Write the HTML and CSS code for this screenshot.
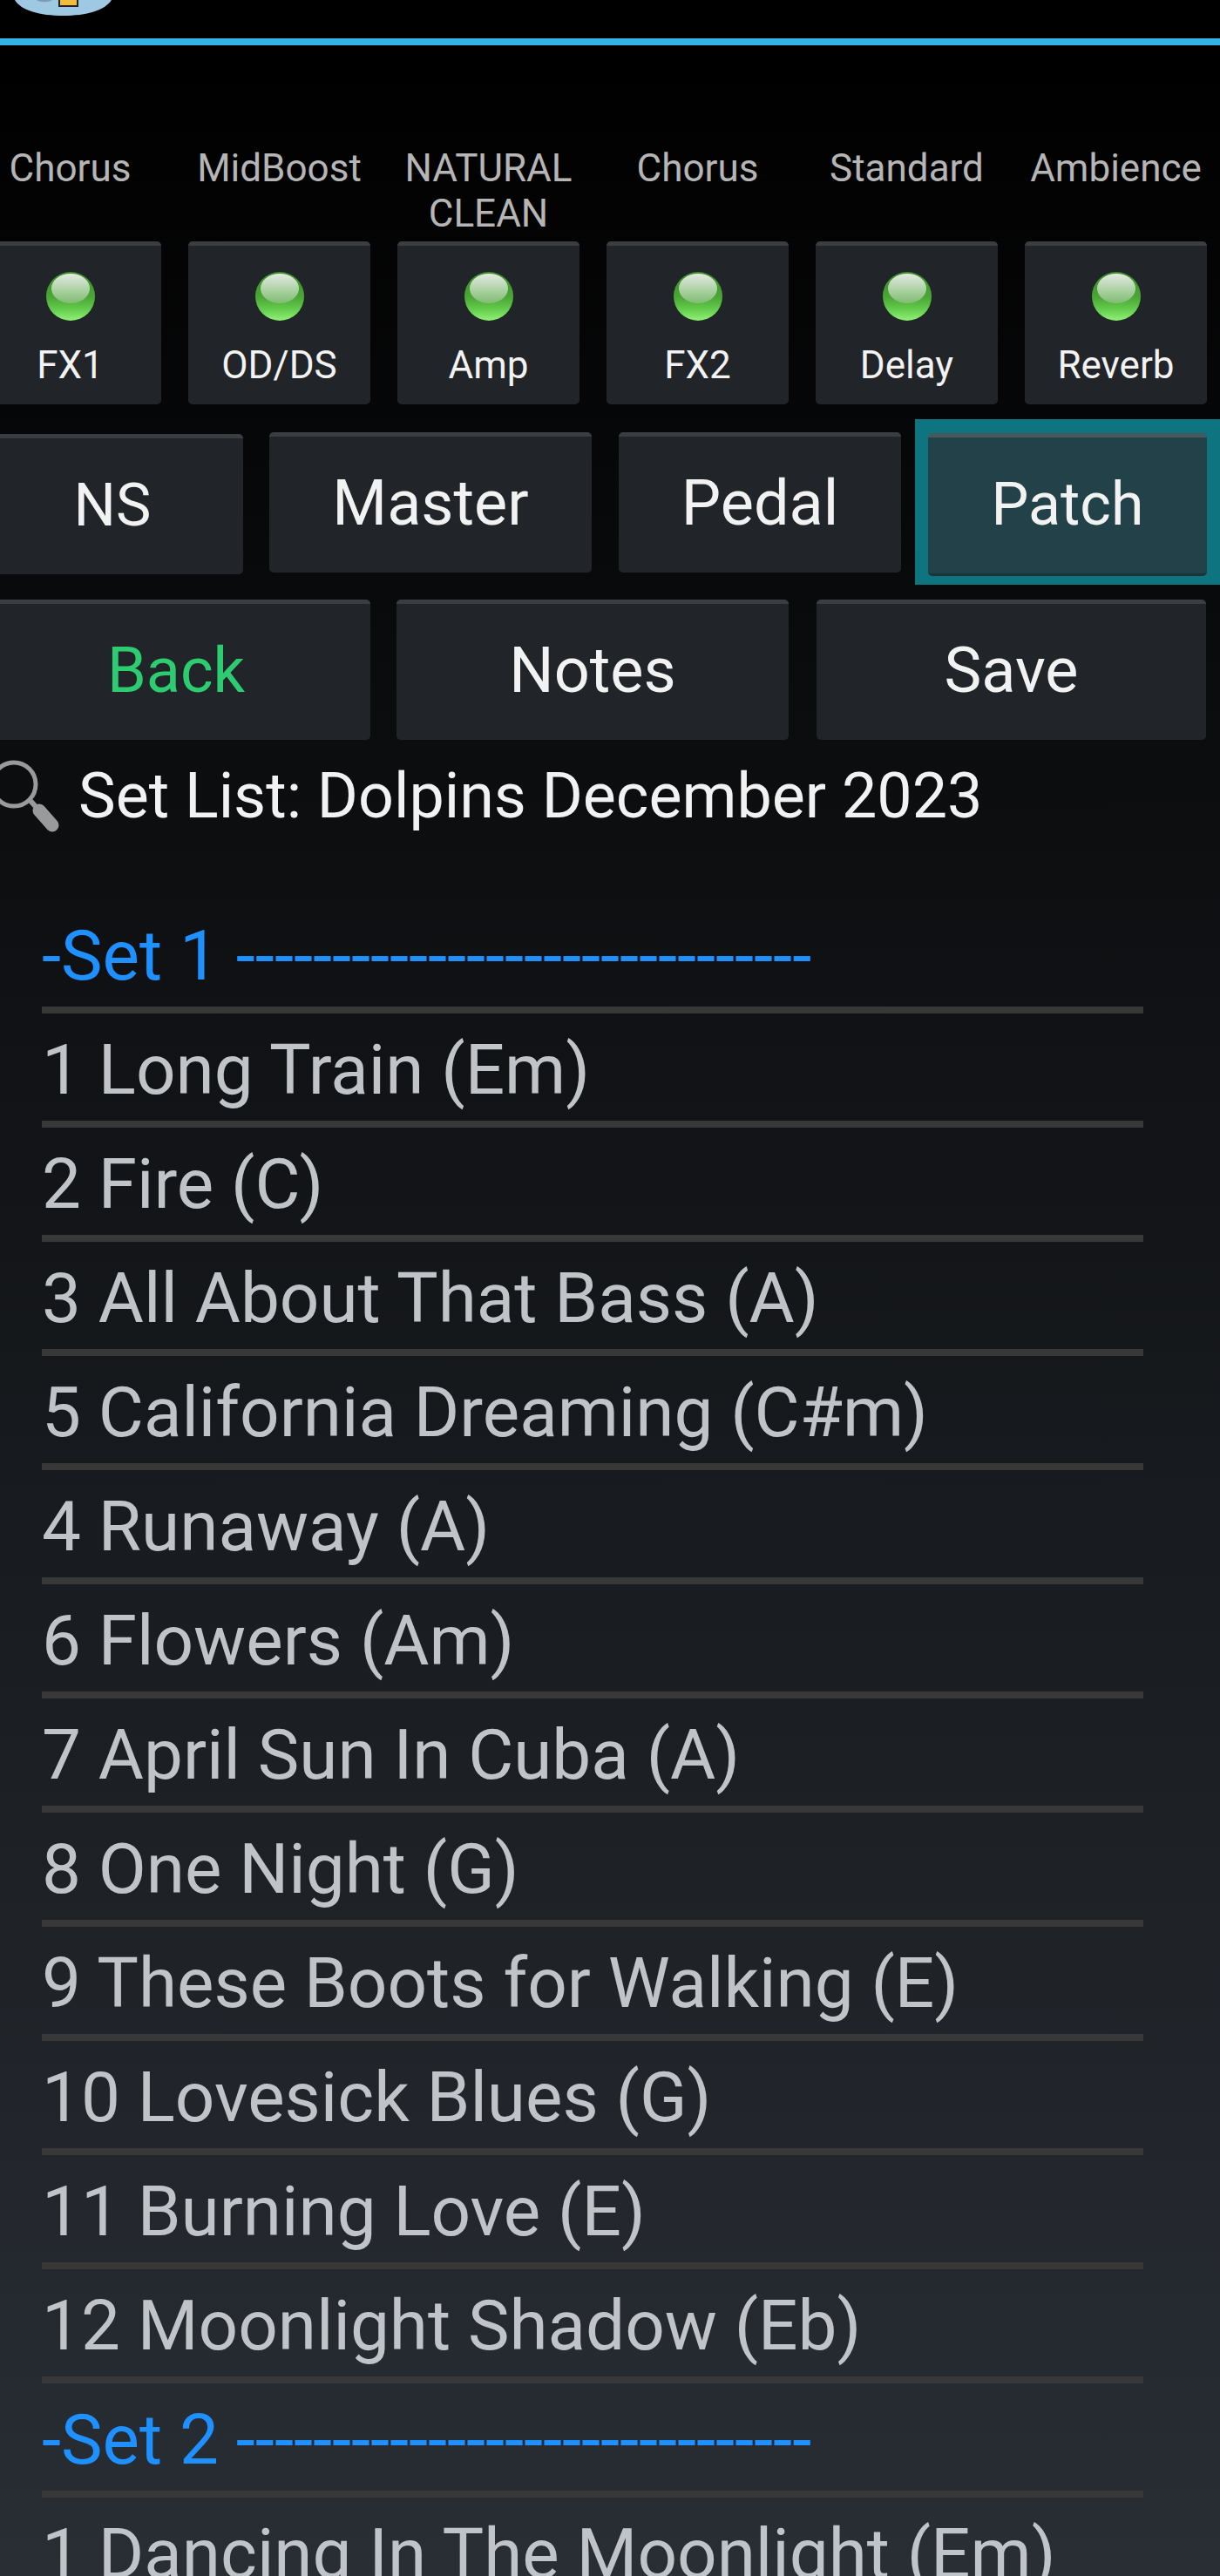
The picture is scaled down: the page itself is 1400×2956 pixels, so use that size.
FILE: index.html
```html
<!DOCTYPE html>
<html lang="en">
<head>
  <meta charset="UTF-8">
  <meta name="viewport" content="width=device-width, initial-scale=1.0">
  <title>Set List</title>
  <link rel="stylesheet" href="styles.css">
</head>
<body>
  <header class="topbar">
    <svg class="app-icon" width="140" height="24" viewBox="0 0 140 24">
      <path d="M17 0 C24 12 46 18 72 18 C100 18 120 12 128 0 Z" fill="#9fc8e2"/>
      <path d="M42 0 C46 3 56 3 60 0 Z" fill="#7f9db0"/>
      <rect x="68" y="-4" width="21" height="11" fill="#f2bd3e" stroke="#222" stroke-width="2"/>
    </svg>
  </header>

  <main class="content">
    <!-- Effect blocks -->
    <div class="fx-grid">
      <div class="fx-name">Chorus</div>
      <div class="fx-name">MidBoost</div>
      <div class="fx-name">NATURAL CLEAN</div>
      <div class="fx-name">Chorus</div>
      <div class="fx-name">Standard</div>
      <div class="fx-name">Ambience</div>

      <button class="btn fx-btn"><span class="led"></span>FX1</button>
      <button class="btn fx-btn"><span class="led"></span>OD/DS</button>
      <button class="btn fx-btn"><span class="led"></span>Amp</button>
      <button class="btn fx-btn"><span class="led"></span>FX2</button>
      <button class="btn fx-btn"><span class="led"></span>Delay</button>
      <button class="btn fx-btn"><span class="led"></span>Reverb</button>
    </div>

    <div class="tabs">
      <button class="btn big-btn tab-ns">NS</button>
      <button class="btn big-btn tab-master">Master</button>
      <button class="btn big-btn tab-pedal">Pedal</button>
      <div class="tab-selected">
        <button class="btn big-btn tab-patch">Patch</button>
      </div>
    </div>

    <div class="actions">
      <button class="btn big-btn action-back">Back</button>
      <button class="btn big-btn action-notes">Notes</button>
      <button class="btn big-btn action-save">Save</button>
    </div>

    <div class="search-row">
      <svg class="search-icon" width="70" height="90" viewBox="0 0 70 90">
        <circle cx="16" cy="31" r="25" fill="none" stroke="#9a9a9a" stroke-width="5"/>
        <path d="M35 50 L44 60" stroke="#9a9a9a" stroke-width="6"/>
        <path d="M45 61 L60 78" stroke="#9a9a9a" stroke-width="15" stroke-linecap="round"/>
      </svg>
      <span class="search-title">Set List: Dolpins December 2023</span>
    </div>

    <!-- Songs -->
    <ul class="songs">
      <li class="song set-head">-Set 1 <span class="dashes">------------------------------</span></li>
      <li class="song">1 Long Train (Em)</li>
      <li class="song">2 Fire (C)</li>
      <li class="song">3 All About That Bass (A)</li>
      <li class="song">5 California Dreaming (C#m)</li>
      <li class="song">4 Runaway (A)</li>
      <li class="song">6 Flowers (Am)</li>
      <li class="song">7 April Sun In Cuba (A)</li>
      <li class="song">8 One Night (G)</li>
      <li class="song">9 These Boots for Walking (E)</li>
      <li class="song">10 Lovesick Blues (G)</li>
      <li class="song">11 Burning Love (E)</li>
      <li class="song">12 Moonlight Shadow (Eb)</li>
      <li class="song set-head">-Set 2 <span class="dashes">------------------------------</span></li>
      <li class="song">1 Dancing In The Moonlight (Em)</li>
    </ul>
  </main>
</body>
</html>
```

FILE: styles.css
```css
html,
body {
  margin: 0;
  padding: 0;
  height: 2956px;
  overflow: hidden;
  background-color: #000;
}

body {
  font-family: Roboto, "Liberation Sans", sans-serif;
  color: #f2f2f2;
}

.topbar {
  height: 44px;
  background-color: #000;
  border-bottom: 8px solid #35b5e5;
}

.app-icon {
  display: block;
}

.content {
  height: 2904px;
  padding-top: 115px;
  box-sizing: border-box;
  background: linear-gradient(#000, #292e35);
}

/* Buttons */
.btn {
  display: block;
  margin: 0;
  padding: 0;
  border: none;
  border-top: 5px solid #3a3e42;
  border-radius: 5px;
  background-color: #212529;
  color: #f2f2f2;
  font-family: inherit;
  box-sizing: border-box;
}

.big-btn {
  height: 161px;
  font-size: 72px;
  line-height: 150px;
  padding-bottom: 2px;
}

/* Effect blocks */
.fx-grid {
  display: grid;
  grid-template-columns: repeat(6, 209px);
  grid-template-rows: 110px 187px;
  column-gap: 31px;
  margin-left: -24px;
  width: 1409px;
}

.fx-name {
  font-size: 44px;
  line-height: 52px;
  text-align: center;
  color: #b5b5b5;
}

.fx-btn {
  display: flex;
  flex-direction: column;
  align-items: center;
  height: 187px;
  padding-top: 30px;
  font-size: 44px;
  line-height: 52px;
}

.led {
  display: block;
  position: relative;
  width: 56px;
  height: 56px;
  margin-bottom: 25px;
  border-radius: 50%;
  background: linear-gradient(#3c8f28 0%, #49a534 50%, #62c94a 75%, #90f276 100%);
}

.led::after {
  content: "";
  position: absolute;
  top: 2px;
  left: 6px;
  width: 44px;
  height: 34px;
  border-radius: 50%;
  background: linear-gradient(#e4eae2, #7fbd70);
}

/* Tabs */
.tabs {
  display: flex;
  align-items: flex-start;
  margin: 17px 0 0 -21px;
}

.tab-ns {
  width: 300px;
  margin: 17px 30px 0 0;
  font-size: 68px;
}

.tab-master {
  width: 370px;
  margin: 15px 31px 0 0;
}

.tab-pedal {
  width: 324px;
  margin: 15px 16px 0 0;
}

.tab-selected {
  width: 350px;
  height: 190px;
  padding: 16px 15px;
  box-sizing: border-box;
  background-color: #0e7580;
}

.tab-patch {
  width: 320px;
  height: 164px;
  font-size: 68px;
  background-color: #234148;
  border-top-color: #445a5e;
  border-bottom: 3px solid #1a3238;
}

/* Back / Notes / Save */
.actions {
  display: flex;
  margin: 17px 0 0 -21px;
}

.action-back {
  width: 446px;
  margin-right: 30px;
  color: #2ecc71;
}

.action-notes {
  width: 450px;
  margin-right: 32px;
}

.action-save {
  width: 447px;
}

/* Search */
.search-row {
  display: flex;
  align-items: center;
  height: 107px;
  margin-top: 11px;
}

.search-icon {
  flex: none;
  margin-right: 20px;
}

.search-title {
  font-size: 71.8px;
  line-height: 92px;
}

/* Songs */
.songs {
  list-style: none;
  margin: 65px 0 0 48px;
  padding: 0;
  width: 1264px;
}

.song {
  height: 131px;
  box-sizing: border-box;
  border-bottom: 8px solid #383838;
  font-size: 80px;
  line-height: 131px;
  color: #c0c4c8;
  white-space: nowrap;
}

.set-head {
  color: #1e90ff;
}

.dashes {
  letter-spacing: -0.1px;
}
```
